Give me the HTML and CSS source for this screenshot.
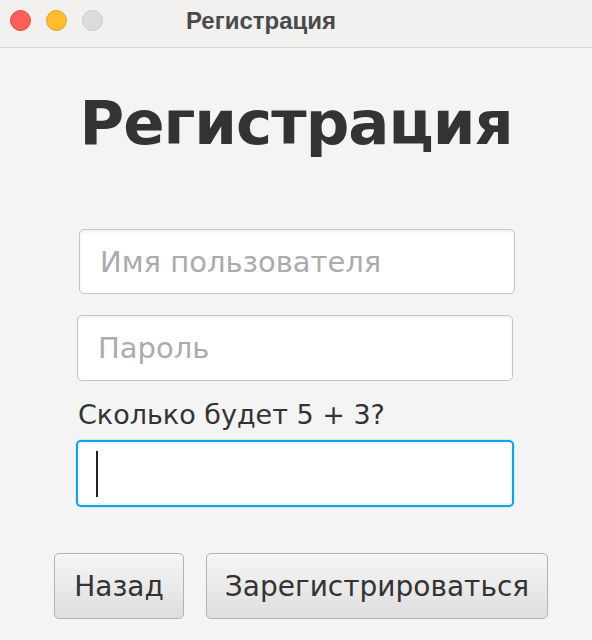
FILE: index.html
```html
<!DOCTYPE html>
<html lang="ru">
<head>
<meta charset="utf-8">
<title>Регистрация</title>
<link rel="stylesheet" href="styles.css">
</head>
<body>
<div class="window">
  <header class="titlebar">
    <div class="lights">
      <span class="light red"></span>
      <span class="light yellow"></span>
      <span class="light gray"></span>
    </div>
    <div class="wtitle">Регистрация</div>
    <div></div>
  </header>
  <main class="content">
    <h1 class="heading">Регистрация</h1>
    <div class="field f1"><span class="placeholder">Имя пользователя</span></div>
    <div class="field f2"><span class="placeholder">Пароль</span></div>
    <div class="label">Сколько будет 5 + 3?</div>
    <div class="field f3 focused"><span class="caret"></span></div>
    <div class="buttons">
      <button class="btn back">Назад</button>
      <button class="btn register">Зарегистрироваться</button>
    </div>
  </main>
</div>
</body>
</html>
```
FILE: styles.css
```css
html, body {
  margin: 0;
  padding: 0;
  background: #f4f4f4;
}
.window {
  width: 592px;
  height: 640px;
  overflow: hidden;
  background: #f4f4f4;
}
.titlebar {
  height: 48px;
  box-sizing: border-box;
  border-bottom: 1px solid #d6d4d2;
  background: #f2f1f0;
  display: grid;
  grid-template-columns: 1fr auto 1fr;
  align-items: center;
  padding-right: 70px;
}
.lights {
  display: flex;
  gap: 15px;
  padding-left: 10px;
  padding-bottom: 6px;
}
.light {
  width: 21px;
  height: 21px;
  border-radius: 50%;
  box-sizing: border-box;
}
.red { background: #fe5f57; border: 1px solid #e2463f; }
.yellow { background: #febc2e; border: 1px solid #e1a123; }
.gray { background: #dcdcdc; border: 1px solid #c8c8c8; }
.wtitle {
  font-family: "Liberation Sans", Arial, sans-serif;
  font-weight: bold;
  font-size: 24px;
  color: #4a4a4a;
  padding-bottom: 6px;
}
.content {
  display: flex;
  flex-direction: column;
  font-family: "DejaVu Sans", sans-serif;
  color: #333;
}
.heading {
  margin: 30px 0 0 0;
  text-align: center;
  font-size: 61px;
  font-weight: bold;
  line-height: 90px;
  color: #333;
  letter-spacing: -1px;
}
.field {
  box-sizing: border-box;
  height: 66px;
  background: #fff;
  border: 1.5px solid #c4c4c4;
  border-radius: 5px;
  display: flex;
  align-items: center;
  padding-left: 20px;
  box-shadow: inset 0 2px 3px rgba(0,0,0,0.06);
}
.f1 { margin: 61px 77px 0 79px; height: 65px; }
.f2 { margin: 21px 79px 0 77px; }
.f3 { margin: 7px 78px 0 76px; height: 67px; }
.placeholder {
  font-size: 29px;
  color: #ababab;
}
.label {
  margin: 16px 0 0 78px;
  font-size: 27px;
  line-height: 36px;
  color: #333;
}
.focused {
  border: 2.5px solid #12a3dc;
  box-shadow: 0 0 0 1px #cfeaf6, inset 0 0 0 2px #eef8fc;
}
.caret {
  width: 2px;
  height: 46px;
  background: #222;
  margin-left: -2px;
}
.buttons {
  display: flex;
  gap: 22px;
  margin: 46px 0 0 54px;
}
.btn {
  height: 66px;
  box-sizing: border-box;
  border: 1.5px solid #b3b3b3;
  border-radius: 5px;
  background: linear-gradient(#f6f6f6, #dedede);
  font-family: "DejaVu Sans", sans-serif;
  font-size: 28px;
  color: #333;
  padding: 0;
}
.back { width: 130px; }
.register { width: 342px; }
```
